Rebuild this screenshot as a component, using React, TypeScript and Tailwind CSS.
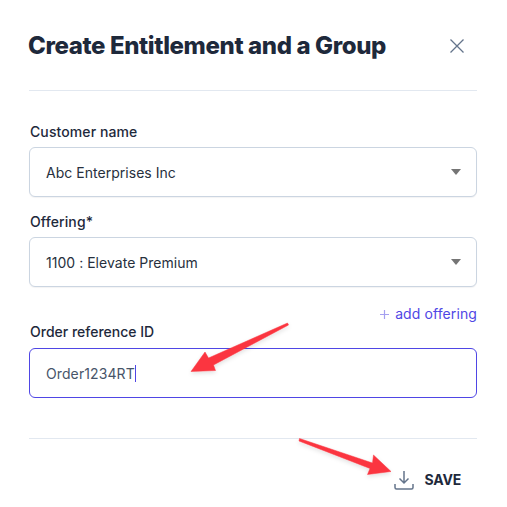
import React from 'react';

const font = { fontFamily: 'Inter, "Noto Sans", sans-serif' };

const SelectField = ({ label, value, labelClass }: { label: string; value: string; labelClass: string }) => (
  <div className={labelClass}>
    <label className="block text-[14px] leading-[20px] font-medium text-[#1e293b] pl-[1px] tracking-[0.1px]">{label}</label>
    <div className="mt-[5px] flex h-[50px] items-center justify-between rounded-[6px] border border-[#cbd5e1] bg-white pl-[16px] pr-[15px] shadow-[0_1px_1px_rgba(15,23,42,0.05)]">
      <span className="text-[14px] text-[#27303d] tracking-[0.03px]">{value}</span>
      <span className="h-0 w-0 border-x-[5px] border-t-[6px] border-x-transparent border-t-[#757575]" />
    </div>
  </div>
);

export default function App() {
  return (
    <div className="relative h-[507px] w-[507px] overflow-hidden bg-white" style={font}>
      <div className="pl-[29px] pr-[30px]">
        <div className="box-content flex h-[90px] items-center justify-between border-b border-[#e2e8f0]">
          <h2 className="-ml-[1px] mt-[2px] text-[24px] font-extrabold tracking-[-0.38px] text-[#1e293b]">Create Entitlement and a Group</h2>
          <svg width="14" height="14" viewBox="0 0 14 14" className="mr-[13px] mt-[2px] text-[#64748b]" fill="none" stroke="currentColor" strokeWidth="1.3">
            <path d="M0.5 0.5 L13.500 13.500 M13.500 0.5 L0.5 13.500" />
          </svg>
        </div>

        <SelectField label="Customer name" value="Abc Enterprises Inc" labelClass="mt-[31px]" />
        <SelectField label="Offering*" value="1100 : Elevate Premium" labelClass="mt-[15px]" />

        <div className="mt-[17px] flex items-center justify-end gap-[6px] text-[14px] leading-[20px] tracking-[0.1px] text-[#4f46e5]">
          <svg width="9" height="9" viewBox="0 0 9 9" fill="none" stroke="#a5a0f0" strokeWidth="1.2">
            <path d="M4.500 0 V9 M0 4.500 H9" />
          </svg>
          <span>add offering</span>
        </div>

        <label className="-mt-[2px] block text-[14px] leading-[20px] font-medium text-[#1e293b] pl-[1px]">Order reference ID</label>
        <div className="mt-[6px] flex h-[50px] items-center rounded-[6px] border border-[#4f46e5] bg-white pl-[16px]">
          <span className="text-[14px] text-[#475569] tracking-[0.1px]">Order1234RT</span>
          <span className="h-[17px] w-px bg-[#4f46e5]" />
        </div>

        <div className="mt-[40px] flex h-[82px] items-center justify-end gap-[11px] border-t border-[#e2e8f0] pr-[16px]">
          <svg width="20" height="20" viewBox="0 0 20 20" fill="none" stroke="#64748b" strokeWidth="1.5">
            <path d="M10 1 V13 M5.500 8.500 L10 13 L14.500 8.500" />
            <path d="M1 14 V17.500 Q1 19 2.500 19 H17.500 Q19 19 19 17.500 V14" />
          </svg>
          <span className="text-[14px] font-bold tracking-[-0.2px] text-[#1e293b]">SAVE</span>
        </div>
      </div>

      <svg className="absolute left-0 top-0 pointer-events-none" width="507" height="507" viewBox="0 0 507 507">
        <defs>
          <filter id="arrowShadow" x="-20%" y="-20%" width="140%" height="140%">
            <feDropShadow dx="0" dy="2" stdDeviation="2" floodColor="#000" floodOpacity="0.12" />
          </filter>
        </defs>
        <path d="M287.500 323 L288.500 325 L213.500 365 L215.500 370.500 L191 371.500 L205 352 L208.500 358 Z" fill="#fb3640" stroke="#fb3640" strokeWidth="0.5" strokeLinejoin="round" filter="url(#arrowShadow)" />
        <path d="M299.500 438.500 L372.500 463 L373.500 455 L391 471.500 L367.500 474.500 L370 468.500 L299 441 Z" fill="#fb3640" stroke="#fb3640" strokeWidth="0.5" strokeLinejoin="round" filter="url(#arrowShadow)" />
      </svg>
    </div>
  );
}
